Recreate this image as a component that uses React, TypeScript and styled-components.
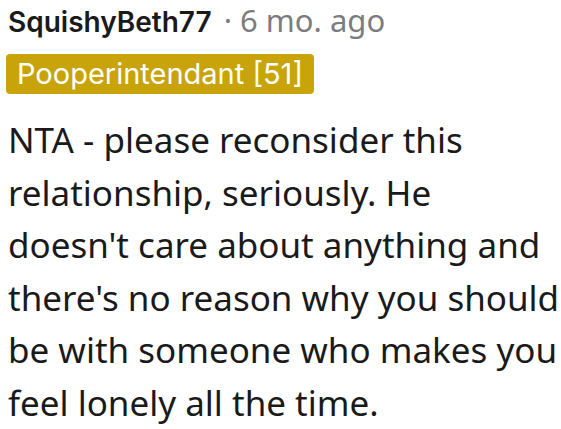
import React from "react";
import styled, { createGlobalStyle } from "styled-components";

const Global = createGlobalStyle`
  html, body { margin: 0; padding: 0; background: #ffffff; }
`;

const Comment = styled.div`
  padding: 2px 0 0 8px;
  display: flex;
  flex-direction: column;
  align-items: flex-start;
`;

const Header = styled.div`
  display: flex;
  align-items: baseline;
  line-height: 36px;
`;

const Author = styled.span`
  font-family: "Inter", "Noto Sans", sans-serif;
  font-size: 28px;
  font-weight: 600;
  color: #1a1a1b;
`;

const Meta = styled.span`
  font-family: "Noto Sans", "Open Sans", sans-serif;
  font-size: 31px;
  color: #7c7c7c;
  margin-left: 12px;
  white-space: pre;
`;

const Flair = styled.span`
  margin-top: 14px;
  margin-left: -2px;
  background: #c8a40a;
  color: #ffffff;
  border-radius: 4px;
  padding: 0 11px;
  font-family: "Inter", "Noto Sans", sans-serif;
  font-size: 29px;
  line-height: 40px;
`;

const Body = styled.p`
  margin: 20px 0 0 0;
  font-family: "Noto Sans", "Open Sans", sans-serif;
  font-size: 35px;
  line-height: 52.5px;
  color: #1a1a1b;
`;

export default function App() {
  return (
    <>
      <Global />
      <Comment>
        <Header>
          <Author>SquishyBeth77</Author>
          <Meta>· 6 mo. ago</Meta>
        </Header>
        <Flair>Pooperintendant [51]</Flair>
        <Body>
          NTA - please reconsider this relationship, seriously. He doesn't care about anything and there's no reason why you should be with someone who makes you feel lonely all the time.
        </Body>
      </Comment>
    </>
  );
}
